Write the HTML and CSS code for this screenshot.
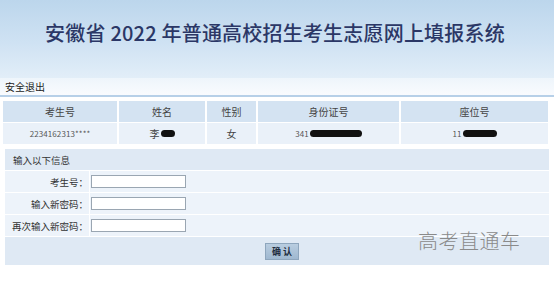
FILE: index.html
```html
<!DOCTYPE html>
<html lang="zh-CN">
<head>
<meta charset="utf-8">
<link rel="stylesheet" href="styles.css">
</head>
<body>
<div class="header">
  <h1 class="title">安徽省 2022 年普通高校招生考生志愿网上填报系统</h1>
</div>
<div class="topbar"><span class="logout">安全退出</span></div>
<div class="info">
  <div class="cell head">考生号</div>
  <div class="cell head">姓名</div>
  <div class="cell head">性别</div>
  <div class="cell head">身份证号</div>
  <div class="cell head">座位号</div>
  <div class="cell data num">2234162313****</div>
  <div class="cell data">李<span class="blot w1"></span></div>
  <div class="cell data">女</div>
  <div class="cell data num">341<span class="blot w2"></span></div>
  <div class="cell data num">11<span class="blot w3"></span></div>
</div>
<div class="form">
  <div class="frow fhead">输入以下信息</div>
  <div class="frow field">
    <div class="label">考生号：</div>
    <div class="value"><input class="inp" type="text"></div>
  </div>
  <div class="frow field">
    <div class="label">输入新密码：</div>
    <div class="value"><input class="inp" type="password"></div>
  </div>
  <div class="frow field">
    <div class="label">再次输入新密码：</div>
    <div class="value"><input class="inp" type="password"></div>
  </div>
  <div class="frow fbtn">
    <button class="btn" type="button">确 认</button>
    <span class="watermark">高考直通车</span>
  </div>
</div>
</body>
</html>
```
FILE: styles.css
```css
body {
  margin: 0;
  background: #ffffff;
  font-family: "Noto Sans CJK SC", "Noto Sans", sans-serif;
  color: #333;
  width: 554px;
  height: 281px;
  overflow: hidden;
}
.header {
  height: 78px;
  background: linear-gradient(to bottom, #bcd6ec 0%, #cfe2f3 55%, #e2eef8 100%);
  display: flex;
  justify-content: center;
  box-sizing: border-box;
  padding-top: 19px;
}
.title {
  margin: 0;
  font-size: 20px;
  line-height: 28px;
  font-weight: 500;
  color: #2b3766;
  letter-spacing: 0.2px;
  word-spacing: 0;
  padding-left: 0;
  margin-right: 4px;
}
.topbar {
  height: 17px;
  background: linear-gradient(to bottom, #eef5fb, #f9fbfe);
  border-bottom: 2px solid #b7d0e8;
  display: flex;
  align-items: center;
  padding-left: 5px;
}
.logout {
  font-size: 10px;
  color: #222;
  line-height: 12px;
}
.info {
  margin: 4px 6px 0 3px;
  display: grid;
  grid-template-columns: 114px 86px 49px 141px 1fr;
  gap: 1px 2px;
}
.cell {
  height: 21px;
  display: flex;
  align-items: center;
  justify-content: center;
  font-size: 10px;
  color: #444;
}
.head { background: #d4e3f2; }
.data { background: #eaf1f9; }
.num { font-size: 8px; letter-spacing: 0.1px; color: #555; }
.blot {
  display: inline-block;
  height: 7px;
  background: #111;
  border-radius: 4px;
  margin-left: 1px;
}
.w1 { width: 14px; }
.w2 { width: 52px; }
.w3 { width: 34px; }
.form {
  margin: 5px 5px 0 5px;
  display: flex;
  flex-direction: column;
  gap: 1px;
}
.frow {
  height: 21px;
  display: flex;
  align-items: center;
}
.fhead {
  background: #dfe9f4;
  font-size: 9.5px;
  color: #333;
  padding-left: 8px;
}
.field { background: #edf3fa; }
.label {
  width: 83px;
  height: 100%;
  display: flex;
  align-items: center;
  justify-content: flex-end;
  font-size: 9.5px;
  color: #333;
  border-right: 1px solid #ffffff;
  padding-right: 1px;
}
.value { padding-left: 1px; display: flex; align-items: center; }
.inp {
  box-sizing: border-box;
  width: 95px;
  height: 13px;
  margin: 0;
  padding: 0;
  border: 1px solid #9aa6b2;
  background: #fff;
}
.fbtn {
  height: 28px;
  background: #dfe9f4;
  justify-content: center;
  position: relative;
}
.btn {
  width: 34px;
  height: 17px;
  margin: 0;
  padding: 0;
  margin-left: 10px;
  border: 1px solid #8ea6bd;
  background: linear-gradient(to bottom, #b9cde0, #9fb8d0);
  font-family: "Noto Sans CJK SC", sans-serif;
  font-size: 9px;
  font-weight: 700;
  color: #1e2d40;
  line-height: 15px;
}
.watermark {
  position: absolute;
  left: 413px;
  top: -11px;
  font-size: 20px;
  font-weight: 300;
  color: #8a8a8a;
  letter-spacing: 0.5px;
}
```
